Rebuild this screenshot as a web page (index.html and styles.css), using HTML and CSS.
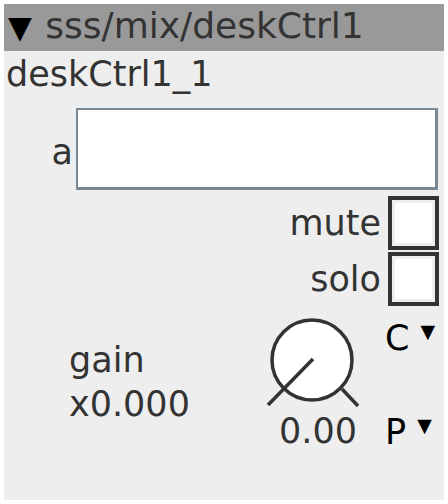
FILE: index.html
```html
<!DOCTYPE html>
<html>
<head>
<meta charset="utf-8">
<link rel="stylesheet" href="styles.css">
</head>
<body>
<div class="panel">
  <div class="header"><span class="tri">▼</span> sss/mix/deskCtrl1</div>
  <div class="name">deskCtrl1_1</div>
  <div class="row-a">
    <span class="lbl-a">a</span>
    <div class="textbox"></div>
  </div>
  <div class="check-row first"><span class="check-lbl">mute</span><div class="check"></div></div>
  <div class="check-row"><span class="check-lbl">solo</span><div class="check"></div></div>
  <div class="bottom">
    <div class="gain">
      <div>gain</div>
      <div>x0.000</div>
    </div>
    <div class="knob-col">
      <svg class="knob" width="100" height="94" viewBox="0 0 100 94">
        <circle cx="50" cy="44" r="40" fill="#fff" stroke="#333" stroke-width="3.5"/>
        <line x1="51" y1="43" x2="6" y2="89" stroke="#333" stroke-width="3.5"/>
        <line x1="80" y1="73" x2="96" y2="90" stroke="#333" stroke-width="3.5"/>
      </svg>
      <div class="knob-val">0.00</div>
    </div>
    <div class="menus">
      <div class="menu">C <span class="mtri">▼</span></div>
      <div class="menu">P <span class="mtri">▼</span></div>
    </div>
  </div>
</div>
</body>
</html>
```
FILE: styles.css
```css
html, body {
  margin: 0;
  padding: 0;
  background: #fff;
}
body {
  font-family: "DejaVu Sans", sans-serif;
  color: #333;
}
.panel {
  margin: 4px;
  width: 440px;
  height: 496px;
  background: #eee;
  display: flex;
  flex-direction: column;
}
.header {
  height: 43px;
  padding-bottom: 4px;
  background: #999;
  font-size: 36px;
  line-height: 43px;
  padding-left: 4px;
  white-space: nowrap;
}
.tri {
  color: #000;
  font-size: 31px;
  margin-right: 2px;
}
.name {
  font-size: 35px;
  line-height: 40px;
  padding-left: 2px;
  margin-top: 3px;
}
.row-a {
  display: flex;
  justify-content: flex-end;
  align-items: center;
  margin-top: 14px;
  padding-right: 6px;
}
.lbl-a {
  font-size: 35px;
  line-height: 40px;
  margin-right: 3px;
  margin-top: 6px;
}
.textbox {
  width: 357px;
  height: 77px;
  background: #fff;
  border-style: solid;
  border-color: #7a8896;
  border-width: 2px 3px 3px 2px;
}
.check-row {
  display: flex;
  justify-content: flex-end;
  align-items: center;
  padding-right: 5px;
  margin-top: 2px;
}
.check-row.first {
  margin-top: 6px;
}
.check-lbl {
  font-size: 35px;
  line-height: 40px;
  margin-right: 7px;
}
.check {
  width: 43px;
  height: 46px;
  border: 4px solid #333;
  background: #fff;
  box-shadow: inset 0 0 0 3px #eee;
}
.bottom {
  display: flex;
  align-items: flex-start;
  margin-top: 4px;
}
.gain {
  font-size: 35px;
  line-height: 44px;
  margin-left: 65px;
  margin-top: 28px;
  width: 193px;
  flex: none;
}
.knob-col {
  display: flex;
  flex-direction: column;
  align-items: center;
  width: 100px;
  flex: none;
  margin-top: 6px;
}
.knob {
  display: block;
}
.knob-val {
  font-size: 35px;
  line-height: 40px;
  margin-top: 1px;
  margin-left: 12px;
  white-space: nowrap;
}
.menus {
  margin-left: 23px;
  margin-top: 1px;
  display: flex;
  flex-direction: column;
  gap: 47px;
}
.menu {
  color: #000;
  font-size: 35px;
  line-height: 40px;
  white-space: nowrap;
}
.mtri {
  font-size: 19px;
  vertical-align: 12px;
}
```
